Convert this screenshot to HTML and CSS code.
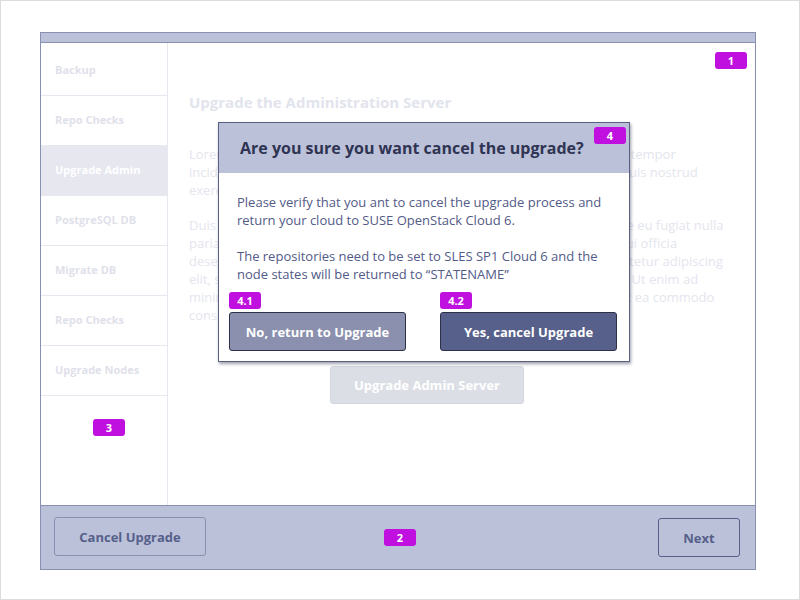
FILE: index.html
```html
<!DOCTYPE html>
<html>
<head>
<meta charset="utf-8">
<link rel="stylesheet" href="styles.css">
</head>
<body>
<div class="page">
  <div class="frame">
    <div class="topbar"></div>
    <div class="main">
      <nav class="sidebar">
        <div class="nav-item first">Backup</div>
        <div class="nav-item">Repo Checks</div>
        <div class="nav-item active">Upgrade Admin</div>
        <div class="nav-item">PostgreSQL DB</div>
        <div class="nav-item">Migrate DB</div>
        <div class="nav-item">Repo Checks</div>
        <div class="nav-item">Upgrade Nodes</div>
        <span class="badge badge-3">3</span>
      </nav>
      <section class="content">
        <span class="badge badge-1">1</span>
        <h1 class="heading">Upgrade the Administration Server</h1>
        <p class="lorem">Lorem ipsum dolor sit amet, consectetur adipisicing elit, sed do eiusmod tempor incididunt ut labore et dolore magna aliqua. Ut enim ad minim veniam, quis nostrud exercitation ullamco laboris nisi ut aliquip.</p>
        <p class="lorem">Duis aute irure dolor in reprehenderit in voluptate velit esse cillum dolore eu fugiat nulla pariatur. Excepteur sint occaecat cupidatat non proident, sunt in culpa qui officia deserunt mollit anim id est laborum. Lorem ipsum dolor sit amet, consectetur adipiscing elit, sed do eiusmod tempor incididunt ut labore et dolore magna aliqua. Ut enim ad minim veniam, quis nostrud exercitation ullamco laboris nisi ut aliquip ex ea commodo consequat.</p>
        <button class="btn-disabled">Upgrade Admin Server</button>

        <div class="modal">
          <div class="modal-header">
            <h2 class="modal-title">Are you sure you want cancel the upgrade?</h2>
            <span class="badge badge-4">4</span>
          </div>
          <div class="modal-body">
            <p>Please verify that you ant to cancel the upgrade process and return your cloud to SUSE OpenStack Cloud 6.</p>
            <p>The repositories need to be set to SLES SP1 Cloud 6 and the node states will be returned to “STATENAME”</p>
            <div class="modal-actions">
              <div class="action">
                <span class="badge badge-inline">4.1</span>
                <button class="btn btn-no">No, return to Upgrade</button>
              </div>
              <div class="action">
                <span class="badge badge-inline">4.2</span>
                <button class="btn btn-yes">Yes, cancel Upgrade</button>
              </div>
            </div>
          </div>
        </div>
      </section>
    </div>
    <footer class="footer">
      <button class="foot-btn cancel">Cancel Upgrade</button>
      <span class="badge badge-2">2</span>
      <button class="foot-btn next">Next</button>
    </footer>
  </div>
</div>
</body>
</html>
```

FILE: styles.css
```css
* { box-sizing: border-box; }
html, body { margin: 0; padding: 0; background: #fff; }
body { font-family: "Open Sans", "Liberation Sans", sans-serif; }

.page {
  width: 800px;
  height: 600px;
  border: 1px solid #dcdcdc;
  padding: 31px 0 0 39px;
}

.frame {
  position: relative;
  width: 716px;
  height: 538px;
  border: 1px solid #8a90b0;
  display: flex;
  flex-direction: column;
}

.topbar {
  height: 10px;
  background: #bbc1d9;
  border-bottom: 1px solid #8a90b0;
}

.main {
  flex: 1;
  display: flex;
  min-height: 0;
}

.sidebar {
  flex: 0 0 127px;
  width: 127px;
  border-right: 1px solid #e6e7ef;
  display: flex;
  flex-direction: column;
}

.nav-item {
  height: 50px;
  border-bottom: 1px solid #e6e7ef;
  display: flex;
  align-items: center;
  padding-left: 14px;
  font-size: 11px;
  font-weight: 700;
  color: #dfe1ea;
  padding-bottom: 2px;
}
.nav-item.first { height: 53px; padding-top: 3px; }
.nav-item.active { background: #e6e7ef; color: #fff; border-bottom-color: #e6e7ef; }

.badge {
  display: inline-flex;
  align-items: center;
  justify-content: center;
  width: 32px;
  height: 17px;
  border-radius: 3px;
  background: #c010e0;
  color: #fff;
  font-family: "Open Sans", "Liberation Sans", sans-serif;
  font-size: 11px;
  font-weight: 700;
  line-height: 1;
}
.badge-3 { margin: 23px 0 0 52px; }
.badge-1 { position: absolute; top: 9px; right: 8px; }
.badge-2 { position: absolute; left: 343px; top: 23px; }
.badge-4 { position: absolute; top: 4px; right: 3px; }

.content {
  position: relative;
  flex: 1;
  min-width: 0;
  padding: 48px 20px 0 21px;
}

.heading {
  margin: 0;
  font-size: 15px;
  font-weight: 700;
  line-height: 22px;
  color: #e2e4ed;
}

.lorem {
  margin: 32px 0 0;
  font-size: 13px;
  line-height: 18px;
  color: #e4e5ee;
  width: 540px;
}
.lorem + .lorem { margin-top: 17px; }

.btn-disabled {
  margin: 42px 0 0 141px;
  width: 194px;
  height: 38px;
  border: 1px solid #d3d6df;
  border-radius: 3px;
  background: #dcdee5;
  color: #fff;
  font-family: "Open Sans", "Liberation Sans", sans-serif;
  font-size: 13px;
  font-weight: 700;
}

.modal {
  position: absolute;
  left: 50px;
  top: 79px;
  width: 412px;
  height: 240px;
  background: #fff;
  border: 1px solid #5b6082;
  box-shadow: 1px 2px 3px rgba(40, 44, 70, 0.45);
  display: flex;
  flex-direction: column;
}

.modal-header {
  position: relative;
  height: 50px;
  background: #bbc1d9;
  display: flex;
  align-items: center;
  padding-left: 21px;
}

.modal-title {
  margin: 0;
  font-size: 16px;
  font-weight: 700;
  color: #2f3453;
  line-height: 24px;
  padding-bottom: 1px;
}

.modal-body {
  padding: 20px 10px 0 18px;
  font-size: 13px;
  line-height: 18px;
  color: #525a87;
}
.modal-body p { margin: 0 0 18px; }
.modal-body p + p { margin-bottom: 0; }

.modal-actions {
  display: flex;
  gap: 34px;
  margin-left: -8px;
  margin-top: 9px;
}

.action {
  display: flex;
  flex-direction: column;
  align-items: flex-start;
  gap: 3px;
}

.btn {
  width: 177px;
  height: 39px;
  border: 1px solid #2d3148;
  border-radius: 3px;
  color: #fff;
  font-family: "Open Sans", "Liberation Sans", sans-serif;
  font-size: 13px;
  font-weight: 700;
}
.btn-no { background: #8a90ad; }
.btn-yes { background: #57608a; }

.footer {
  position: relative;
  height: 64px;
  background: #bbc1d9;
  border-top: 1px solid #8a90b0;
  display: flex;
  justify-content: space-between;
  align-items: flex-start;
  padding: 11px 15px 0 13px;
}

.foot-btn {
  height: 39px;
  background: transparent;
  border-radius: 3px;
  font-family: "Open Sans", "Liberation Sans", sans-serif;
  font-size: 13px;
  font-weight: 700;
  color: #56608a;
}
.foot-btn.cancel { width: 152px; border: 1px solid #8a90b0; }
.foot-btn.next { width: 82px; border: 1px solid #56608a; margin-top: 1px; }
```
